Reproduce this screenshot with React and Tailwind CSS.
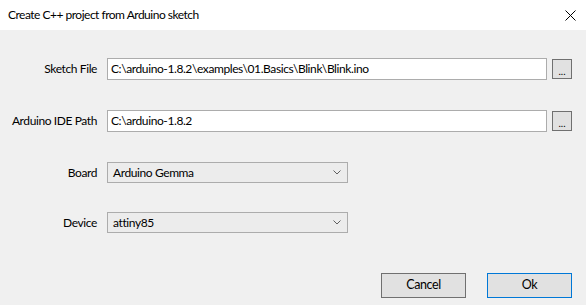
import React from "react";

function Chevron() {
  return (
    <svg width="8" height="5" viewBox="0 0 8 5" className="mr-[6px]">
      <path d="M0.5 0.5 L4 4 L7.5 0.5" fill="none" stroke="#606060" strokeWidth="1" />
    </svg>
  );
}

export default function App() {
  return (
    <div className="w-[586px] h-[305px] bg-[#f0f0f0] text-[12px] tracking-[-0.4px] text-black overflow-hidden font-['Lato',sans-serif]">
      <div className="h-[30px] bg-white flex items-center justify-between pl-[8px] pr-[10px]">
        <span className="tracking-[-0.5px]">Create C++ project from Arduino sketch</span>
        <svg width="11" height="11" viewBox="0 0 11 11">
          <path d="M0.5 0.5 L10.5 10.5 M10.5 0.5 L0.5 10.5" stroke="#000" strokeWidth="1" />
        </svg>
      </div>

      <div className="flex flex-col pt-[28px]">
        <div className="flex items-center h-[22px]">
          <div className="w-[97px] text-right">Sketch File</div>
          <div className="ml-[10px] w-[440px] h-[22px] bg-white border border-[#acacac] flex items-center pl-[3px]">
            C:\arduino-1.8.2\examples\01.Basics\Blink\Blink.ino
          </div>
          <button className="ml-[5px] w-[20px] h-[20px] bg-[#e1e1e1] border border-[#707070] flex items-end justify-center text-[10px] leading-[14px] tracking-normal">...</button>
        </div>

        <div className="flex items-center h-[22px] mt-[30px]">
          <div className="w-[97px] text-right">Arduino IDE Path</div>
          <div className="ml-[10px] w-[440px] h-[22px] bg-white border border-[#acacac] flex items-center pl-[3px]">
            C:\arduino-1.8.2
          </div>
          <button className="ml-[5px] w-[20px] h-[20px] bg-[#e1e1e1] border border-[#707070] flex items-end justify-center text-[10px] leading-[14px] tracking-normal">...</button>
        </div>

        <div className="flex items-center h-[21px] mt-[30px]">
          <div className="w-[97px] text-right">Board</div>
          <div className="ml-[10px] w-[241px] h-[21px] bg-[#ececec] border border-[#acacac] flex items-center justify-between pl-[5px]">
            <span>Arduino Gemma</span>
            <Chevron />
          </div>
        </div>

        <div className="flex items-center h-[21px] mt-[29px]">
          <div className="w-[97px] text-right">Device</div>
          <div className="ml-[10px] w-[241px] h-[21px] bg-[#ececec] border border-[#acacac] flex items-center justify-between pl-[5px]">
            <span>attiny85</span>
            <Chevron />
          </div>
        </div>

        <div className="flex justify-end mt-[40px] pr-[14px] gap-[21px]">
          <button className="w-[85px] h-[25px] bg-[#e1e1e1] border border-[#707070] text-[12.5px]">Cancel</button>
          <button className="w-[85px] h-[25px] bg-[#e1e1e1] border border-[#0078d7] text-[12.5px]">Ok</button>
        </div>
      </div>
    </div>
  );
}
